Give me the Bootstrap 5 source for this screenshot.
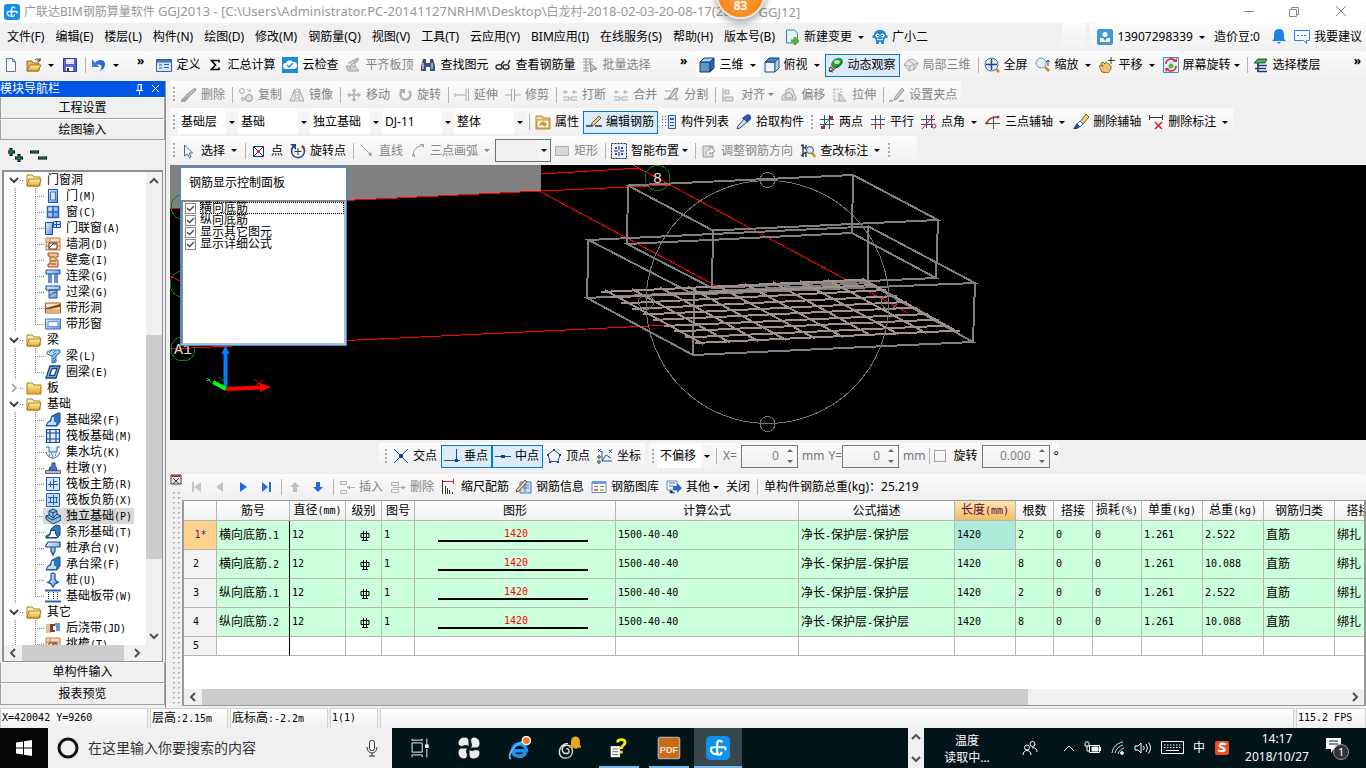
<!DOCTYPE html>
<html lang="zh-CN">
<head>
<meta charset="utf-8">
<meta name="viewport" content="width=device-width, initial-scale=1">
<title>广联达BIM钢筋算量软件 GGJ2013</title>
<link href="https://cdn.jsdelivr.net/npm/bootstrap@5.3.0/dist/css/bootstrap.min.css" rel="stylesheet">
<style>
:root{--face:#f0f0f0;--edge:#a0a0a0;--hot:#0078d7;--hotbg:#dcebf7;--sel:#0055e5}
body{font:12px/16px "Noto Sans","Noto Sans CJK SC",sans-serif;color:#000;background:var(--face)}
button,input,select{font:inherit;color:inherit}
a{color:inherit;text-decoration:none}
.song{font-family:"DejaVu Sans Mono","Noto Sans CJK SC",monospace}
.hw{font-size:10px;font-family:"DejaVu Sans Mono",monospace}
.min0{min-width:0;min-height:0}
.ic{width:16px;height:16px;flex:none}
.titlebar{height:23px;color:#999;background:#fff}
.lat{font-size:13px}
.behind{margin-left:28px}
.menurow{height:28px;padding-left:2px}
.menurow .mi{padding:0 6px 0 5px;border:0;background:none;white-space:nowrap}
.toprow{height:28px}
.strip{background:linear-gradient(#fcfcfc,#efefef);white-space:nowrap;border-radius:2px}
.tb{display:inline-flex;align-items:center;gap:4px;height:23px;padding:0 3px 0 2px;border:1px solid transparent;background:none;white-space:nowrap}
.tb:disabled{color:#848484}
.tb.on{border-color:var(--hot);background:var(--hotbg)}
.dd::after{content:"";border:3px solid transparent;border-top:3px solid currentColor;border-bottom:0;margin:0 1px 0 2px}
.tight::after{margin:0 0 0 -1px}
.vsep{width:1px;height:16px;margin:0 2px 0 3px;background:#b4b4b4;flex:none}
.grip{width:8px;height:17px;flex:none;background:radial-gradient(circle,#aaa 1px,transparent 1px) 2px 0/4px 4px repeat-y}
.more{font-weight:bold;height:28px;line-height:12px;border:0;background:none;padding:0 5px 8px}
.sel-box{appearance:none;border:0;border-radius:0;height:23px;width:72px;padding:0 16px 0 3px;background:#fff url("data:image/svg+xml,%3Csvg xmlns='http://www.w3.org/2000/svg' width='12' height='23'%3E%3Crect width='12' height='23' fill='%23f4f4f4'/%3E%3Cpath d='M3 10h6l-3 3z'/%3E%3C/svg%3E") right 0 center no-repeat}
.sel-box.s60{width:60px}
.sel-box.s56{width:56px}
.sel-box.boxed{width:56px;border:1px solid #707070;background-color:#f0f0f0}
.r26{height:26px}.r27{height:27px}.r28{height:28px}.r29{height:29px}
.work{padding-top:2px}
.side{width:166px;flex:none;border-right:1px solid #8f8f8f;padding-bottom:3px}
.side-h{height:16px;background:var(--sel);color:#fff}
.navbtn{height:22px;border:1px solid var(--edge);border-top-color:#fff;background:#f0f0f0;width:100%}
.pm{height:30px;padding:8px}
.treebox{border:1px solid #8a9099;border-width:2px 1px 1px 2px;background:#fff;margin:0 2px 0 2px}
.tree li{height:16px;white-space:nowrap}
.tree .branch{display:flex;align-items:center;padding-left:4px}
.tree .branch .arr{width:12px;height:12px}
.tree .branch .stub{width:3px;margin-right:3px;border-top:1px dotted #808080}
.tree .branch .ic{margin-right:5px}
.leaf{--v:repeating-linear-gradient(#808080 0 1px,transparent 1px 2px);padding-left:39px;
 background:var(--v) 11px 0/1px 16px no-repeat,var(--v) 31px 0/1px 16px no-repeat,repeating-linear-gradient(90deg,#808080 0 1px,transparent 1px 2px) 31px 8px/10px 1px no-repeat}
.leaf.end{background-size:1px 16px,1px 9px,10px 1px}
.leaf a{display:inline-flex;align-items:center;gap:5px;padding:0 2px;height:16px;vertical-align:top}
.leaf a.cur{background:#d9d9d9}
.vs{width:16px;background:#f0f0f0;flex:none}
.hs{height:16px;background:#f0f0f0;flex:none}
.thumb{background:#cdcdcd}
.view{background:#000;min-height:120px;overflow:hidden}
.view svg.scene{display:block}
.panel{left:10px;top:2px;width:167px;height:179px;background:#fff;border:1px solid #2f8ae8}
.phead{height:32px;padding:7px 8px}
.plist{border:2px solid #838990;border-right-color:#b8bcc0;border-bottom-color:#b8bcc0}
.plist label{display:flex;align-items:center;height:12px;line-height:12px;gap:4px;padding-left:2px}
.plist input{appearance:none;width:11px;height:11px;flex:none;margin:0;border:1px solid #888;background:#fff url("data:image/svg+xml,%3Csvg xmlns='http://www.w3.org/2000/svg' width='9' height='9'%3E%3Cpath d='M1 4l2.5 2.5L8 2' fill='none' stroke='%23444' stroke-width='1.3'/%3E%3C/svg%3E")}
.plist .foc{outline:1px dotted #000;outline-offset:-1px;flex:1}
.snap{height:32px;padding-left:208px}
.num{display:flex;width:57px;height:23px;border:1px solid #7a7a7a;align-items:center;color:#808080}
.num.wide{width:68px}
.num input{width:0;flex:1;border:0;background:none;text-align:right;padding:0 4px 0 0}
.cbx{appearance:none;width:12px;height:12px;border:1px solid #a0a0a0;margin:0 8px 0 2px}
.lower{padding:2px 0 2px}
.dots{width:12px;flex:none;background:radial-gradient(circle,#b0b0b0 1px,transparent 1px) 1px 0/5px 5px}
.gridwrap{background:#fff;border:1px solid #999;border-width:1px 2px 1px 2px}
.gt{table-layout:fixed;width:1222px;border-collapse:separate;border-spacing:0}
.gt th,.gt td{border-right:1px solid #b4b8b4;border-bottom:1px solid #b4b8b4;padding:0 0 0 2px;overflow:hidden;white-space:nowrap;font-weight:normal;vertical-align:middle}
.gt thead th{height:20px;text-align:center;background:linear-gradient(#fff,#f0f0f0);padding:0}
.gt tbody th{text-align:center;background:#f2f2f2;padding:0 8px 0 0}
.gt tbody th.hot{padding:0 0 0 1px}
.gt tbody tr{height:29px;background:#ccffdb}
.gt tbody tr.new{height:19px;background:#fff}
.gt tbody td:nth-child(2){border-right:1px solid #000}
.gt thead th.hot{background:linear-gradient(#fde3b4,#f1bd63);color:#5c0a3c}
.gt tbody th.hot{background:#ffd38c;color:#5c0a7c}
.gt td.cell{background:#adebd8}
.gt .bar{width:150px;height:2px;background:#000;margin:0 21px}
.gt .len{line-height:12px;color:#f00;text-align:center}
.blank{height:33px}
.status{height:20px;gap:2px}
.status>div{border:1px solid #d0d0d0;border-bottom:0;background:linear-gradient(#fff,#f0f0f0);padding:1px 0 0 1px;white-space:nowrap}
.w148{width:148px}.w78{width:78px}.w98{width:98px}.w48{width:48px}.w70{width:70px}
.task{height:40px;background:#04151a;color:#fff}
.task button{border:0;background:none;padding:0}
.task .start{width:48px;background:#050708;display:flex;align-items:center;justify-content:center}
.search{width:344px;background:#f0f0f0;color:#333;margin-right:2px}
.search input{font-size:14px;border:0;background:none;padding:0}
.search input::placeholder{color:#333;opacity:1}
.app-i{width:50px;height:40px;display:flex;align-items:center;justify-content:center}
.app-i svg{width:24px;height:24px}
.task .run{background:linear-gradient(#76b9ed,#76b9ed) center bottom/40px 2px no-repeat}
.task .act{width:48px;background:#37474b;box-shadow:inset 0 -2px #76b9ed}
.temp{width:86px;padding:4px 0;line-height:17px}
.tray{width:208px;margin-left:12px}
.clock{width:78px;margin:0 8px;padding:2px 0;line-height:18px}
.ball{left:716px;top:-30px;width:49px;height:49px;border-radius:50%;background:radial-gradient(circle at 50% 60%,#ffa040,#f57400);border:2px solid #e8e4e0;box-shadow:0 3px 8px #0006;color:#fff;font:bold 12px/16px "Open Sans",sans-serif;padding-top:26px}
</style>
</head>
<body>
<svg width="0" height="0" class="position-absolute" aria-hidden="true" fill="none">
<defs>
<linearGradient id="gb" x2="1" y2="1"><stop stop-color="#e8f3ff"/><stop offset="1" stop-color="#5b93d6"/></linearGradient>
<linearGradient id="gy" x2="0" y2="1"><stop stop-color="#fff2b0"/><stop offset="1" stop-color="#e0a42c"/></linearGradient>
</defs>
<symbol id="logo" viewBox="0 0 16 16"><rect width="16" height="16" rx="3" fill="#1190ee"/><path d="M10.500 3.800C8.500 2.300 7.500 3.500 7.500 5v6c0 2 2.500 2 2.800 0M7.500 12C5 12.500 3.300 11 3.300 9c0-1.200.7-1.500 1.700-1.500h7c1 0 1.300.7 1 1.500" stroke="#fff" stroke-width="1.400" fill="none" stroke-linecap="round"/></symbol>
<symbol id="new" viewBox="0 0 16 16"><path d="M3.500 1.500h6l3 3v10h-9z" fill="#fff" stroke="#56749c"/><path d="M9.500 1.500v3h3" fill="none" stroke="#56749c"/></symbol>
<symbol id="open" viewBox="0 0 16 16"><path d="M1 4h5l1 2h6v8H1z" fill="#e8b84a" stroke="#9b7320"/><path d="M1 14l3-6h11l-3 6z" fill="url(#gy)" stroke="#9b7320"/><path d="M9 3c2-2 4-1 5 1m0-3v3h-3" fill="none" stroke="#333"/></symbol>
<symbol id="save" viewBox="0 0 16 16"><path d="M1.500 1.500h13v13h-13z" fill="#5a64d0" stroke="#33378c"/><path d="M4 2h8v5H4z" fill="#dfe8ff"/><path d="M4 10h7v4H4z" fill="#fff"/><path d="M5 11h2v3H5z" fill="#333"/></symbol>
<symbol id="undo" viewBox="0 0 16 16"><path d="M4 6c4-5 10-3 10 1 0 4-3 6-5 7 2-3 3-8-3-6" fill="#2e68c9"/><path d="M1 2v8h7z" fill="#3c7be0"/></symbol>
<symbol id="def" viewBox="0 0 16 16"><path d="M.5 2.500h15v12H.5z" fill="#d5e6fb" stroke="#2f62ae"/><path d="M1 3h14v2H1zM3 8h3M3 11h3" stroke="#2f62ae" fill="#5c8cd0"/><path d="M8 7h5v1H8zM8 10h5v1H8z" fill="#2f62ae"/></symbol>
<symbol id="sum" viewBox="0 0 16 16"><path d="M12 5.500V3.500H4.500l4 4.500-4 4.500H12v-2" fill="none" stroke="#000" stroke-width="1.600"/></symbol>
<symbol id="cloud" viewBox="0 0 16 16"><path d="M0 0h16v16H0z" fill="#178edb"/><path d="M4 12a3 3 0 010-6 4 4 0 017-1 3.500 3.500 0 011 7z" fill="#fff"/><path d="M5 8l2 2 4-4" stroke="#178edb" stroke-width="1.500" fill="none"/></symbol>
<symbol id="slab" viewBox="0 0 16 16"><path d="M1 9h9l4 5H3zM3 6l10-5v3L6 8M5 9v4M10 3v6" fill="#d0d0d0" stroke="#a4a4a4"/></symbol>
<symbol id="bino" viewBox="0 0 16 16"><path d="M3 2h3v4h4V2h3l2 7v5h-5v-4H6v4H1V9z" fill="#3c4f74"/><path d="M3 6v6M12 6v6" stroke="#b8c8e8" stroke-width="1.500"/></symbol>
<symbol id="glass" viewBox="0 0 16 16"><path d="M6 8l3-4M13 7l2-4" stroke="#333" stroke-width="1.500"/><ellipse cx="4" cy="10" rx="3" ry="2.200" fill="none" stroke="#333" stroke-width="1.500"/><ellipse cx="11" cy="10" rx="3" ry="2.200" fill="none" stroke="#333" stroke-width="1.500"/></symbol>
<symbol id="batch" viewBox="0 0 16 16"><path d="M1 2h10M1 5h10M1 8h6M1 11h6M1 14h6M4 2v12M8 2v5" stroke="#999" fill="none"/><path d="M8 6l7 6-4 .5L9 15z" fill="#ccc" stroke="#888"/></symbol>
<symbol id="cube" viewBox="0 0 16 16"><path d="M1 5h10v10H1z" fill="#5d97cf" stroke="#163a66"/><path d="M1 5l4-4h10l-4 4z" fill="#a9d0f2" stroke="#163a66"/><path d="M11 5l4-4v10l-4 4z" fill="#2e6aa8" stroke="#163a66"/></symbol>
<symbol id="cubet" viewBox="0 0 16 16"><path d="M1 5h10v10H1z" fill="#eaf3fc" stroke="#285284"/><path d="M1 5l4-4h10l-4 4z" fill="#3e86cc" stroke="#163a66"/><path d="M11 5l4-4v10l-4 4z" fill="#b5d2ee" stroke="#285284"/></symbol>
<symbol id="orbit" viewBox="0 0 16 16"><ellipse cx="9" cy="6" rx="6.500" ry="4.500" transform="rotate(-35 9 6)" fill="#2a9848"/><ellipse cx="9" cy="5" rx="3" ry="2" fill="#aee8a4"/><path d="M1 14c4 0 9-4 13-9M2 10l-1 4 4 1" stroke="#194a28" fill="none"/><path d="M2 10l4 3" stroke="#d22" stroke-width="1.500"/></symbol>
<symbol id="part3" viewBox="0 0 16 16"><path d="M1 8l4-5 5-1 5 4-3 6-6 2zM1 8l6 1 8-3M7 9l-1 5M5 3l6 4v6" fill="#e6e6e6" stroke="#aaa"/></symbol>
<symbol id="full" viewBox="0 0 16 16"><circle cx="7.500" cy="7.500" r="6.500" fill="#e6f0fc" stroke="#4767a0"/><path d="M7.500 2v11M2 7.500h11" stroke="#1b3f8c" stroke-width="1.500"/><path d="M12 12l3 3" stroke="#c08a30" stroke-width="2.500"/></symbol>
<symbol id="zoomi" viewBox="0 0 16 16"><circle cx="6" cy="6" r="5" fill="#e6f0fc" stroke="#8095b8"/><path d="M13 3v6m-2-4l2-2 2 2" stroke="#1b3f8c" fill="none"/><path d="M10 10l4 4" stroke="#c08a30" stroke-width="2.500"/></symbol>
<symbol id="hand" viewBox="0 0 16 16"><path d="M3 15L0 9l2-1 2 2-2-4 2-1 2 2 1-2 3 2 2 2v3l-3 4z" fill="#eec36c" stroke="#93692a"/><path d="M12 0v7M9 3.500h7" stroke="#333"/></symbol>
<symbol id="rots" viewBox="0 0 16 16"><path d="M.5.500h15v15H.5z" fill="#dceffc" stroke="#3f8bc5"/><path d="M3 7a5 5 0 019-3M13 9a5 5 0 01-9 3" stroke="#e12c2c" stroke-width="1.600" fill="none"/><path d="M10 5h4V1zM2 11l4 0-3 4z" fill="#e12c2c"/><circle cx="8" cy="9" r="2.500" fill="#62b347"/></symbol>
<symbol id="floors" viewBox="0 0 16 16"><path d="M1 6l4-4h9l-2 4z" fill="#4fae5a" stroke="#1b5c34"/><path d="M4 8.500h10M2 11.500h11M4 14.500h10M5 6v9" stroke="#1f3d74" stroke-width="1.600"/></symbol>
<symbol id="brush" viewBox="0 0 16 16"><path d="M14 1l1 2-7 7-3-2z" fill="#bbb" stroke="#999"/><path d="M5 8l3 3-4 4H0v-2z" fill="#a4a4a4"/></symbol>
<symbol id="brushc" viewBox="0 0 16 16"><path d="M13 0l3 3-6 7-3-2z" fill="#f0d080" stroke="#806020"/><path d="M7 7l3 3-3 3-3-3z" fill="#fff" stroke="#36c"/><path d="M4 9l3 4-3 2H0z" fill="#234a86"/></symbol>
<symbol id="copy" viewBox="0 0 16 16"><circle cx="4" cy="4" r="2.500" fill="none" stroke="#aaa"/><circle cx="11" cy="11" r="3.500" fill="#ddd" stroke="#999"/><circle cx="5" cy="12" r="1.500" stroke="#aaa" fill="none"/><path d="M9 2l3 3V2" stroke="#aaa" fill="none"/></symbol>
<symbol id="mirror" viewBox="0 0 16 16"><path d="M6 2v12H1zM10 2v12h5z" fill="#e8e8e8" stroke="#a4a4a4"/><path d="M8 1v14" stroke="#aaa" stroke-dasharray="2 1"/></symbol>
<symbol id="move" viewBox="0 0 16 16"><path d="M8 2v12M2 8h12" stroke="#bcbcbc" stroke-width="2"/><path d="M8 1L5.500 4h5zM8 15l-2.500-3h5zM1 8l3-2.500v5zM15 8l-3-2.500v5z" fill="#b4b4b4"/></symbol>
<symbol id="rot" viewBox="0 0 16 16"><path d="M5 4a5 5 0 107 0" fill="none" stroke="#b4b4b4" stroke-width="2.500"/><path d="M2 2h6v5z" fill="#b0b0b0"/></symbol>
<symbol id="extend" viewBox="0 0 16 16"><path d="M1 8h10M1 6v4M12 2v12M14.500 2v12" stroke="#aaa" fill="none"/></symbol>
<symbol id="trim" viewBox="0 0 16 16"><path d="M0 8h6M10 8h6M6.500 2v12M9.500 2v12" stroke="#aaa" fill="none"/></symbol>
<symbol id="brk" viewBox="0 0 16 16"><path d="M1 5h5M10 5h5M3 3v4M12 3v4M1 10h6v3H1M15 10H9v3h6" stroke="#aaa" fill="none"/></symbol>
<symbol id="split" viewBox="0 0 16 16"><path d="M0 12h15M1 4h6M12 2v12M3 12L12 3" stroke="#999" fill="none"/><path d="M10 2l4-1-1 4-6 6-2 1 1-3z" fill="#ccc" stroke="#999"/></symbol>
<symbol id="align" viewBox="0 0 16 16"><path d="M2 1v14" stroke="#999"/><path d="M4 3h4v4H4zM4 10h8v4H4z" fill="#ddd" stroke="#aaa"/></symbol>
<symbol id="offs" viewBox="0 0 16 16"><path d="M1 13V9l3-2 1-4 3-2 4 2 1 4 2 3v3z" fill="#e2e2e2" stroke="#aaa"/><path d="M4 11l1-4 3-2 3 3 1 3z" fill="none" stroke="#999"/></symbol>
<symbol id="stretch" viewBox="0 0 16 16"><path d="M2 2h7v12H2z" fill="#eee" stroke="#aaa" stroke-dasharray="2 1"/><path d="M7 6l7 8H7z" fill="#ddd" stroke="#aaa"/></symbol>
<symbol id="gripset" viewBox="0 0 16 16"><path d="M0 14h4M10 14h5" stroke="#999" stroke-width="1.500"/><path d="M13 1l2 2-7 9-3 1 1-3z" fill="#ccc" stroke="#999"/></symbol>
<symbol id="prop" viewBox="0 0 16 16"><path d="M1 2h6l1 2h7v11H1z" fill="#f8d98d" stroke="#b58a30"/><path d="M2 6h12v8H2z" fill="#fff" stroke="#b58a30"/><path d="M3 12c4-6 6-6 9-2l-2 3-3-2z" fill="#d99838"/></symbol>
<symbol id="edit" viewBox="0 0 16 16"><path d="M0 12h6l2-3M9 12h7" stroke="#333" stroke-width="1.500" fill="none"/><path d="M13 2l2 2-7 7-3 1 1-3z" fill="#f6d47c" stroke="#555"/></symbol>
<symbol id="list" viewBox="0 0 16 16"><path d="M1.500 2v12M4.500 2v12" stroke="#557" stroke-dasharray="1 2"/><path d="M7.500 1.500h7v13h-7z" fill="#d9e8fb" stroke="#2d5faf"/><path d="M9 4h4v2H9zM9 8h4v1H9zM9 11h4v1H9z" fill="#2d5faf"/></symbol>
<symbol id="pick" viewBox="0 0 16 16"><path d="M10 1c3-2 6 1 5 4l-4 4-5-5z" fill="#2759a8"/><path d="M8 5l3 3-7 6-3 1 1-3z" fill="#c8ddf6" stroke="#456"/></symbol>
<symbol id="two" viewBox="0 0 16 16"><path d="M5.500 1v14M10.500 1v14M1 5.500h14M1 10.500h14" stroke="#405078"/><path d="M2 14L13 3" stroke="#22a03a"/><path d="M11 2h3v3h-3zM2 12h3v3H2z" fill="#c22"/></symbol>
<symbol id="para" viewBox="0 0 16 16"><path d="M5.500 1v14M10.500 1v14M1 5.500h14" stroke="#405080"/><path d="M1 10.500h14" stroke="#c22"/></symbol>
<symbol id="ang" viewBox="0 0 16 16"><path d="M5.500 1v13M10.500 1v13M0 5.500h14M0 10.500h12" stroke="#405080"/><path d="M1 15L13 1" stroke="#c22"/><circle cx="13" cy="12" r="2" fill="none" stroke="#c22"/></symbol>
<symbol id="arcx" viewBox="0 0 16 16"><path d="M2 9c1-4 5-6 11-6" stroke="#c22" fill="none" stroke-width="1.300"/><circle cx="2" cy="9" r="1.500" fill="#c22"/><circle cx="13" cy="3" r="1.500" fill="#c22"/><path d="M0 9.500h15M8.500 2v13" stroke="#555"/></symbol>
<symbol id="deldim" viewBox="0 0 16 16"><path d="M1.500 1v5M14.500 1v5M1 3.500h13" stroke="#333"/><path d="M7 8l7 7M14 8l-7 7" stroke="#d22" stroke-width="1.600"/></symbol>
<symbol id="cursor" viewBox="0 0 16 16"><path d="M3.500 2v11l3-2 2 4 1.500-1-2-4h3.500z" fill="#fff" stroke="#48608c"/></symbol>
<symbol id="pt" viewBox="0 0 16 16"><path d="M2.500 3.500h10v10h-10z" fill="#fff" stroke="#1c2c80"/><path d="M3 4l9 9M12 4l-9 9" stroke="#1c2c80"/><path d="M6 7h3v3H6z" fill="#d22"/></symbol>
<symbol id="rotpt" viewBox="0 0 16 16"><path d="M4 3a6.500 6.500 0 108 0" fill="none" stroke="#2b4886" stroke-width="1.600"/><path d="M0 1h6v6z" fill="#2b4886"/><path d="M8 5v7M4.500 8.500h7" stroke="#333"/><circle cx="13" cy="4" r="1.500" fill="#c22"/></symbol>
<symbol id="line" viewBox="0 0 16 16"><path d="M2 2l10 10" stroke="#999"/><path d="M13 13l-4-1 3-3z" fill="#999"/></symbol>
<symbol id="arc" viewBox="0 0 16 16"><path d="M3 14C3 8 5 4 11 3" stroke="#999" fill="none"/><path d="M9 1h5v4zM2 11h3v4z" fill="#aaa"/></symbol>
<symbol id="rect" viewBox="0 0 16 16"><path d="M1.500 3.500h13v9h-13z" fill="#d8d8d8" stroke="#b0b0b0"/></symbol>
<symbol id="smart" viewBox="0 0 16 16"><path d="M.5.500h15v15H.5z" fill="#e4eefc" stroke="#223" stroke-dasharray="2 1"/><path d="M3 8h10M8 3v10" stroke="#223" stroke-dasharray="4 2"/><path d="M4 4h2v2H4zM10 4h2v2h-2zM4 10h2v2H4zM10 10h2v2h-2z" fill="#1c4f9e"/></symbol>
<symbol id="dir" viewBox="0 0 16 16"><path d="M2 3h10v11H2z" fill="#ddd" stroke="#999"/><path d="M5 12c0-4 1-5 4-5V3l5 5-5 3v-2" fill="#f4f4f4" stroke="#999"/></symbol>
<symbol id="chk" viewBox="0 0 16 16"><path d="M1 2l5 4M1 13l5-4M3 1v13M6 2v3M6 9v5" stroke="#234" stroke-width="1.300"/><circle cx="10" cy="7" r="3.500" fill="#d9e9fc" stroke="#456"/><path d="M12 10l3 4" stroke="#d29030" stroke-width="2.500"/></symbol>
<symbol id="x1" viewBox="0 0 16 16"><path d="M1 1l14 14M15 1L1 15" stroke="#1d4f9e"/><path d="M6 6h4v4H6z" fill="#16408c"/></symbol>
<symbol id="x2" viewBox="0 0 16 16"><path d="M0 12.500h16M12.500 1v12" stroke="#1d4f9e"/><path d="M11 11h3v3h-3z" fill="#16408c"/></symbol>
<symbol id="x3" viewBox="0 0 16 16"><path d="M0 8.500h16" stroke="#1d4f9e"/><path d="M6 7h4v3H6z" fill="#16408c"/></symbol>
<symbol id="x4" viewBox="0 0 16 16"><path d="M8 2l6 4.500-2 7H4l-2-7z" fill="none" stroke="#1d4f9e"/><path d="M7 1h2v2H7zM13 6h2v2h-2zM11 13h2v2h-2zM3 13h2v2H3zM1 6h2v2H1z" fill="#16408c"/></symbol>
<symbol id="x5" viewBox="0 0 16 16"><path d="M5 3v10h10M5 13l4-6 5 3M1 1l3 3M4 1L1 4M12 2l3 3M15 1l-3 4" stroke="#1d4f9e" fill="none"/><circle cx="2" cy="9" r="1.300" stroke="#333" fill="none"/><circle cx="2" cy="14" r="1.300" stroke="#333" fill="none"/></symbol>
<symbol id="ins" viewBox="0 0 16 16"><path d="M1.500 2.500h6v3h-6zM1.500 11.500h6v3h-6zM8 8.500h8" fill="#f0f0f0" stroke="#b4b4b4"/><path d="M8 8.500l3-2v4z" fill="#aaa"/></symbol>
<symbol id="del" viewBox="0 0 16 16"><path d="M1.500 3.500h7v3h-7zM1.500 10.500h7v3h-7zM3 8.500h12" fill="#f0f0f0" stroke="#b4b4b4"/><path d="M16 8.500l-4-2v4z" fill="#aaa"/></symbol>
<symbol id="scale" viewBox="0 0 16 16"><path d="M1.500 1v14M4.500 7v8M6.500 9v6M8.500 11v4M11.500 13v2" stroke="#333"/><path d="M2 2.500h10M12.500 0v5" stroke="#c22"/></symbol>
<symbol id="info" viewBox="0 0 16 16"><path d="M4 3h11v11H4z" fill="#c9defa" stroke="#5276b4"/><path d="M7 6h6M7 9h6M9 3v10" stroke="#5276b4"/><path d="M9 1l2 2-8 9-3 1 1-3z" fill="#f5d37a" stroke="#555"/></symbol>
<symbol id="lib" viewBox="0 0 16 16"><path d="M1 2.500h14v11H1z" fill="#fff" stroke="#6488c0"/><path d="M1 2h14v3H1z" fill="#6f9bd8"/><path d="M3 7.500h4M9 7.500h4" stroke="#777"/><path d="M3 11h4" stroke="#d33" stroke-width="1.500"/><path d="M9 11h4" stroke="#d90" stroke-width="1.500"/></symbol>
<symbol id="oth" viewBox="0 0 16 16"><path d="M1 2h10v9H1z" fill="#f3f7fd" stroke="#6c8cc0"/><path d="M3 4h6M3 7h4M4 11v3h5" stroke="#678"/><path d="M7 7h4V4l5 5-5 5v-3H7z" fill="#2b66c8"/></symbol>
<symbol id="fold" viewBox="0 0 16 16"><path d="M1 3h5l2 2h6v9H1z" fill="#fff1b3" stroke="#a97c1c"/><path d="M1 14l2-7h12l-2 7z" fill="url(#gy)" stroke="#a97c1c"/></symbol>
<symbol id="foldc" viewBox="0 0 16 16"><path d="M1 3h5l2 2h7v9H1z" fill="url(#gy)" stroke="#a97c1c"/></symbol>
<symbol id="t1" viewBox="0 0 16 16"><path d="M3.500 1.500h9v13h-9z" fill="url(#gb)" stroke="#1b4ea8"/><path d="M5.500 4h5v8h-5z" fill="#d8e8ff" stroke="#3f70c4"/></symbol>
<symbol id="t2" viewBox="0 0 16 16"><path d="M2.500 2.500h11v11h-11zM8 3v10M3 8h10" fill="url(#gb)" stroke="#2a62c0" stroke-width="1.500"/></symbol>
<symbol id="t3" viewBox="0 0 16 16"><path d="M.5 2.500h7v12h-7z" fill="url(#gb)" stroke="#1b4ea8"/><path d="M8.500 1.500h7v6h-7zM8.500 4.500h7M11.500 1v6" fill="#cfe2ff" stroke="#1b4ea8"/></symbol>
<symbol id="t4" viewBox="0 0 16 16"><path d="M1 2h14v12H1zM1 6h14M1 10h14M5 2v4M10 10v4" fill="#f9dcc0" stroke="#c87a44"/><path d="M4 13V7h8v6z" fill="#fff" stroke="#5a3010"/><path d="M4 12l4-4 3 0" stroke="#5a3010" fill="none"/></symbol>
<symbol id="t5" viewBox="0 0 16 16"><path d="M3 1h10v4h-2v3h2v7H3v-3h2V4H3z" fill="#f3c294" stroke="#9c5220"/><path d="M6 5h4M6 9h5M6 12h5" stroke="#9c5220"/></symbol>
<symbol id="t6" viewBox="0 0 16 16"><path d="M1 2h14v4H1z" fill="url(#gb)" stroke="#1d4f9e"/><path d="M4 6v9M6 6v9M10 6v9M12 6v9" stroke="#2e68c0" stroke-width="1.500"/></symbol>
<symbol id="t7" viewBox="0 0 16 16"><path d="M1 2h14v4H1zM4 6h8v8H4z" fill="url(#gb)" stroke="#1d4f9e"/><path d="M4 12l4-3 4-1" stroke="#1d4f9e" fill="none"/></symbol>
<symbol id="t8" viewBox="0 0 16 16"><path d="M.5 3h15v10H.5z" fill="#fbe6cf" stroke="#a0521c"/><path d="M1 8l14-4v3L5 9H1z" fill="#8a4a20"/><path d="M1 9h14v4H1z" fill="#e8b080"/></symbol>
<symbol id="t9" viewBox="0 0 16 16"><path d="M.5 3h15v10H.5z" fill="url(#gb)" stroke="#3f70c4"/><path d="M3 5.500h10v5H3z" fill="#eaf2ff" stroke="#6b95dc"/></symbol>
<symbol id="t10" viewBox="0 0 16 16"><path d="M2 4l4-2h9v3l-4 3v6l-4 1V8L2 6z" fill="url(#gb)" stroke="#2470b8"/><path d="M7 8l4-3M8 11l3-3M8 14l3-3M4 5l3-3M8 5l3-3" stroke="#2470b8"/></symbol>
<symbol id="t11" viewBox="0 0 16 16"><path d="M5 2h10l-4 12H1zM7 4.500h5l-2.500 7h-5z" fill="#8db7ea" fill-rule="evenodd" stroke="#123f88" stroke-width="1.300"/></symbol>
<symbol id="t12" viewBox="0 0 16 16"><path d="M1 14l2-4 2-1 2-5 6-3h2v9l-3 4z" fill="#2d74ba" stroke="#154a84"/><path d="M2 13l2-3h2l1-5h2v5h2v3z" fill="#bfe0f8"/></symbol>
<symbol id="t13" viewBox="0 0 16 16"><path d="M1.500 1.500h13v13h-13zM5 5h6v6H5zM2 5h12M2 11h12M5 2v12M11 2v12" fill="#dceaff" stroke="#154a94" stroke-width="1.200"/></symbol>
<symbol id="t14" viewBox="0 0 16 16"><path d="M1 3h3v5h8V3h3M1 8c2 8 12 8 14 0" fill="#dceaff" stroke="#2b65b0"/><path d="M4 11h1M7 12h1M10 11h1M6 10h1" stroke="#124"/></symbol>
<symbol id="t15" viewBox="0 0 16 16"><path d="M.5 10.500h15v3H.5z" fill="#b8b8b8" stroke="#666"/><path d="M4 10l1-3h2V3h3v4h1l1 3z" fill="#4c7fd6" stroke="#1c439a"/></symbol>
<symbol id="t16" viewBox="0 0 16 16"><path d="M1.500 1.500h13v13h-13z" fill="#d8e8ff" stroke="#1d5bb4"/><path d="M3 8.500h10M8.500 3v10M5.500 5v6M8 5.500h4" stroke="#1d5bb4"/></symbol>
<symbol id="t17" viewBox="0 0 16 16"><path d="M1.500 1.500h13v13h-13z" fill="#c4dafa" stroke="#1d5bb4"/><path d="M3 5.500h10M3 10.500h10M8.500 3v10M5.500 5v6M11.500 5v6" stroke="#1d5bb4"/></symbol>
<symbol id="t18" viewBox="0 0 16 16"><path d="M1 8l3-1V3l4-2 4 2v3l4 2v4l-8 4-7-5z" fill="#8fbde4" stroke="#123f74"/><path d="M1 8l6 4 9-4M4 3l4 2 4-2M8 5v5M4 7l4 3 4-4" stroke="#123f74" fill="none"/></symbol>
<symbol id="t19" viewBox="0 0 16 16"><path d="M1 14h11l3-3V2l-4-1-5 4-1 5-4 2z" fill="#3778c2" stroke="#123f84"/><path d="M2 13.500l3-3 1-4h4l1 4 2 3z" fill="#fff" stroke="#123f84"/></symbol>
<symbol id="t20" viewBox="0 0 16 16"><path d="M1 5l2-3h12v5H1zM6 7h4v4l-2 4-2-4z" fill="url(#gb)" stroke="#154a94" stroke-width="1.200"/></symbol>
<symbol id="t21" viewBox="0 0 16 16"><path d="M6 2l2-1 2 1v5l2 3h2l-4 2-2 3-2-3-4-2h2l2-3z" fill="url(#gb)" stroke="#154a94" stroke-width="1.200"/></symbol>
<symbol id="t22" viewBox="0 0 16 16"><path d="M0 2.500h16M0 13.500h16" stroke="#2b65b0" stroke-width="2"/><path d="M3.500 4v8M8.500 4v8M12.500 4v8" stroke="#123" stroke-dasharray="1 1"/></symbol>
<symbol id="t23" viewBox="0 0 16 16"><path d="M1 4h5v9H1z" fill="#d9c0b0"/><path d="M5 4h5v8H5z" fill="#80401c"/><path d="M10 3h5v8h-4z" fill="#5f96dc"/><path d="M8 6h3v4H8z" fill="#fff"/></symbol>
<symbol id="steel" viewBox="0 0 12 12"><path d="M2 3.500h8v4H2zM4.500 1v9M7.500 1v9M3 10.500h6" fill="none" stroke="#000"/></symbol>
<symbol id="up" viewBox="0 0 10 10"><path d="M1 7l4-4 4 4" fill="none" stroke="#505050" stroke-width="2"/></symbol>
</svg>

<div class="vh-100 d-flex flex-column overflow-hidden position-relative">
<header class="titlebar d-flex align-items-center flex-shrink-0">
 <svg class="ic mx-1"><use href="#logo"/></svg>
 <span class="text-nowrap">广联达BIM钢筋算量软件 <span class="lat">GGJ2013 - [C:\Users\Administrator.PC-20141127NRHM\Desktop\</span>白龙村<span class="lat">-2018-02-03-20-08-17(26</span></span><span class="lat behind">GGJ12]</span>
 <svg class="ms-auto me-3" width="110" height="14" fill="none" stroke="#888" role="img" aria-label="窗口按钮"><path d="M4 6.500h10M49.500 4.500h7v7h-7zM51.500 4V2.500h7v7H57M96 1l10 10M106 1L96 11"/></svg>
</header>
<div class="ball position-absolute text-center z-3">83</div>

<nav class="menurow d-flex align-items-center flex-shrink-0" aria-label="主菜单">
 <div class="d-flex">
 <button class="mi">文件(F)</button><button class="mi">编辑(E)</button><button class="mi">楼层(L)</button><button class="mi">构件(N)</button><button class="mi">绘图(D)</button><button class="mi">修改(M)</button><button class="mi">钢筋量(Q)</button><button class="mi">视图(V)</button><button class="mi">工具(T)</button><button class="mi">云应用(Y)</button><button class="mi">BIM应用(I)</button><button class="mi">在线服务(S)</button><button class="mi">帮助(H)</button><button class="mi">版本号(B)</button>
 </div>
 <button class="tb dd"><svg class="ic" viewBox="0 0 16 16"><path d="M2.500 1h8l3 3v10h-11z" fill="#e4f1fc" stroke="#3c7fc0"/><path d="M11 8v8M7 12h8" stroke="#4eb31c" stroke-width="3"/></svg>新建变更</button>
 <button class="tb"><svg class="ic" viewBox="0 0 16 16"><path d="M8 1c4 0 6 2 6 5l2 1-1 2-2 0-1 3v3H9v-2H7v2H4v-3L3 9H1L0 7l2-1c0-3 2-5 6-5z" fill="#1a8ade"/><circle cx="5.500" cy="6.500" r="2" fill="#fff"/><circle cx="10.500" cy="6.500" r="2" fill="#fff"/><circle cx="6" cy="6.500" r=".8" fill="#124"/><circle cx="10" cy="6.500" r=".8" fill="#124"/><path d="M5 10q3 2 6 0" stroke="#fff" fill="none"/></svg>广小二</button>
 <div class="strip r28 ms-auto px-2 me-1"><span class="px-1"></span></div>
 <div class="strip r28 d-flex align-items-center ps-1">
  <button class="tb dd"><svg class="ic" viewBox="0 0 16 16"><rect width="16" height="16" rx="2" fill="#3e98d2"/><circle cx="8" cy="5.500" r="2.500" fill="#fff"/><path d="M3 13V9h10v4z" fill="#fff"/><path d="M6 9h4l-2 3z" fill="#3e98d2"/></svg>13907298339</button>
  <span class="ms-1">造价豆:0</span>
  <button class="tb ms-2" aria-label="通知"><svg class="ic" viewBox="0 0 16 16"><path d="M8 0c4 0 5 3 5 6v4l2 2H1l2-2V6c0-3 1-6 5-6zM6 13h4l-2 2z" fill="#1b80ea"/></svg></button>
  <button class="tb"><svg class="ic" viewBox="0 0 16 16"><path d="M.500 1.500h15v10h-3v3l-3-3h-9z" fill="#f4f9ff" stroke="#2a80e0"/><path d="M3 6.500h10" stroke="#2a80e0" stroke-dasharray="2 1.500"/></svg>我要建议</button>
 </div>
</nav>

<div class="toprow d-flex flex-shrink-0">
 <div class="strip d-flex align-items-center">
  <button class="tb" aria-label="新建"><svg class="ic"><use href="#new"/></svg></button>
  <button class="tb dd" aria-label="打开"><svg class="ic"><use href="#open"/></svg></button>
  <button class="tb" aria-label="保存"><svg class="ic"><use href="#save"/></svg></button>
  <span class="vsep"></span>
  <button class="tb dd" aria-label="撤销"><svg class="ic"><use href="#undo"/></svg></button>
  <button class="more ms-2" aria-label="更多">»</button>
 </div>
 <div class="strip d-flex align-items-center flex-grow-1 ps-1">
  <button class="tb"><svg class="ic"><use href="#def"/></svg>定义</button><button class="tb"><svg class="ic"><use href="#sum"/></svg>汇总计算</button><button class="tb"><svg class="ic"><use href="#cloud"/></svg>云检查</button><button class="tb" disabled><svg class="ic"><use href="#slab"/></svg>平齐板顶</button><button class="tb"><svg class="ic"><use href="#bino"/></svg>查找图元</button><button class="tb"><svg class="ic"><use href="#glass"/></svg>查看钢筋量</button><button class="tb" disabled><svg class="ic"><use href="#batch"/></svg>批量选择</button>
  <button class="more ms-auto" aria-label="更多">»</button>
 </div>
 <div class="strip d-flex align-items-center ps-1">
  <button class="tb dd bg-white"><svg class="ic"><use href="#cube"/></svg>三维</button><button class="tb dd"><svg class="ic"><use href="#cubet"/></svg>俯视</button><button class="tb on"><svg class="ic"><use href="#orbit"/></svg>动态观察</button><button class="tb" disabled><svg class="ic"><use href="#part3"/></svg>局部三维</button><span class="vsep"></span><button class="tb"><svg class="ic"><use href="#full"/></svg>全屏</button><button class="tb dd"><svg class="ic"><use href="#zoomi"/></svg>缩放</button><button class="tb dd"><svg class="ic"><use href="#hand"/></svg>平移</button><button class="tb dd tight"><svg class="ic"><use href="#rots"/></svg>屏幕旋转</button><span class="vsep"></span><button class="tb"><svg class="ic"><use href="#floors"/></svg>选择楼层</button>
  <button class="more ms-4" aria-label="更多">»</button>
 </div>
</div>

<div class="work d-flex flex-grow-1 overflow-hidden min0">
 <aside class="side d-flex flex-column song">
  <div class="side-h d-flex align-items-center">模块导航栏<svg class="ms-auto me-1" width="28" height="12" fill="none" stroke="#fff"><path d="M3 7.500h7M5 7V1.500h3V7M8.500 1v6M6.500 8v4M19 2l7 7M26 2l-7 7"/></svg></div>
  <button class="navbtn">工程设置</button>
  <button class="navbtn">绘图输入</button>
  <div class="pm flex-shrink-0"><svg class="d-block" width="42" height="14" fill="none" stroke="#000"><path d="M3 0v8M-1 4h8M11 6v8M7 10h8M22 4h9M30 10h9" stroke-width="3"/><path d="M3 1v6M0 4h6M11 7v6M8 10h6M23 4h7M31 10h7" stroke="#1fb28c"/></svg></div>
  <div class="treebox d-flex flex-column flex-grow-1 overflow-hidden">
   <div class="d-flex flex-grow-1 overflow-hidden">
    <ul class="tree list-unstyled mb-0 flex-grow-1 overflow-hidden">
     <li class="branch"><svg class="arr" viewBox="0 0 12 12"><path d="M2 4l4 4 4-4" fill="none" stroke="#444" stroke-width="2"/></svg><span class="stub"></span><svg class="ic"><use href="#fold"/></svg>门窗洞</li>
     <li class="leaf"><a href="#"><svg class="ic"><use href="#t1"/></svg><span>门<span class="hw">(M)</span></span></a></li>
     <li class="leaf"><a href="#"><svg class="ic"><use href="#t2"/></svg><span>窗<span class="hw">(C)</span></span></a></li>
     <li class="leaf"><a href="#"><svg class="ic"><use href="#t3"/></svg><span>门联窗<span class="hw">(A)</span></span></a></li>
     <li class="leaf"><a href="#"><svg class="ic"><use href="#t4"/></svg><span>墙洞<span class="hw">(D)</span></span></a></li>
     <li class="leaf"><a href="#"><svg class="ic"><use href="#t5"/></svg><span>壁龛<span class="hw">(I)</span></span></a></li>
     <li class="leaf"><a href="#"><svg class="ic"><use href="#t6"/></svg><span>连梁<span class="hw">(G)</span></span></a></li>
     <li class="leaf"><a href="#"><svg class="ic"><use href="#t7"/></svg><span>过梁<span class="hw">(G)</span></span></a></li>
     <li class="leaf"><a href="#"><svg class="ic"><use href="#t8"/></svg><span>带形洞</span></a></li>
     <li class="leaf end"><a href="#"><svg class="ic"><use href="#t9"/></svg><span>带形窗</span></a></li>
     <li class="branch"><svg class="arr" viewBox="0 0 12 12"><path d="M2 4l4 4 4-4" fill="none" stroke="#444" stroke-width="2"/></svg><span class="stub"></span><svg class="ic"><use href="#fold"/></svg>梁</li>
     <li class="leaf"><a href="#"><svg class="ic"><use href="#t10"/></svg><span>梁<span class="hw">(L)</span></span></a></li>
     <li class="leaf end"><a href="#"><svg class="ic"><use href="#t11"/></svg><span>圈梁<span class="hw">(E)</span></span></a></li>
     <li class="branch"><svg class="arr" viewBox="0 0 12 12"><path d="M4 2l4 4-4 4" fill="none" stroke="#999" stroke-width="1.500"/></svg><span class="stub"></span><svg class="ic"><use href="#foldc"/></svg>板</li>
     <li class="branch"><svg class="arr" viewBox="0 0 12 12"><path d="M2 4l4 4 4-4" fill="none" stroke="#444" stroke-width="2"/></svg><span class="stub"></span><svg class="ic"><use href="#fold"/></svg>基础</li>
     <li class="leaf"><a href="#"><svg class="ic"><use href="#t12"/></svg><span>基础梁<span class="hw">(F)</span></span></a></li>
     <li class="leaf"><a href="#"><svg class="ic"><use href="#t13"/></svg><span>筏板基础<span class="hw">(M)</span></span></a></li>
     <li class="leaf"><a href="#"><svg class="ic"><use href="#t14"/></svg><span>集水坑<span class="hw">(K)</span></span></a></li>
     <li class="leaf"><a href="#"><svg class="ic"><use href="#t15"/></svg><span>柱墩<span class="hw">(Y)</span></span></a></li>
     <li class="leaf"><a href="#"><svg class="ic"><use href="#t16"/></svg><span>筏板主筋<span class="hw">(R)</span></span></a></li>
     <li class="leaf"><a href="#"><svg class="ic"><use href="#t17"/></svg><span>筏板负筋<span class="hw">(X)</span></span></a></li>
     <li class="leaf"><a href="#" class="cur"><svg class="ic"><use href="#t18"/></svg><span>独立基础<span class="hw">(P)</span></span></a></li>
     <li class="leaf"><a href="#"><svg class="ic"><use href="#t19"/></svg><span>条形基础<span class="hw">(T)</span></span></a></li>
     <li class="leaf"><a href="#"><svg class="ic"><use href="#t20"/></svg><span>桩承台<span class="hw">(V)</span></span></a></li>
     <li class="leaf"><a href="#"><svg class="ic"><use href="#t12"/></svg><span>承台梁<span class="hw">(F)</span></span></a></li>
     <li class="leaf"><a href="#"><svg class="ic"><use href="#t21"/></svg><span>桩<span class="hw">(U)</span></span></a></li>
     <li class="leaf end"><a href="#"><svg class="ic"><use href="#t22"/></svg><span>基础板带<span class="hw">(W)</span></span></a></li>
     <li class="branch"><svg class="arr" viewBox="0 0 12 12"><path d="M2 4l4 4 4-4" fill="none" stroke="#444" stroke-width="2"/></svg><span class="stub"></span><svg class="ic"><use href="#fold"/></svg>其它</li>
     <li class="leaf"><a href="#"><svg class="ic"><use href="#t23"/></svg><span>后浇带<span class="hw">(JD)</span></span></a></li>
     <li class="leaf"><a href="#"><svg class="ic"><use href="#t4"/></svg><span>挑檐<span class="hw">(T)</span></span></a></li>
    </ul>
    <div class="vs d-flex flex-column align-items-center py-1">
     <svg width="10" height="10"><use href="#up"/></svg>
     <div style="flex:148"></div><div class="thumb w-100" style="flex:222"></div><div style="flex:71"></div>
     <svg width="10" height="10"><g transform="rotate(180 5 5)"><use href="#up"/></g></svg>
    </div>
   </div>
   <div class="hs d-flex align-items-center ps-1"><svg width="10" height="10"><g transform="rotate(-90 5 5)"><use href="#up"/></g></svg><div class="thumb h-100 ms-1" style="width:102px"></div><svg class="ms-2" width="10" height="10"><g transform="rotate(90 5 5)"><use href="#up"/></g></svg></div>
  </div>
  <button class="navbtn">单构件输入</button>
  <button class="navbtn">报表预览</button>
 </aside>

 <main class="d-flex flex-column flex-grow-1 ms-1 min0">
  <div class="d-flex r27 flex-shrink-0"><div class="strip d-flex align-items-center" role="toolbar">
   <span class="grip"></span><button class="tb" disabled><svg class="ic"><use href="#brush"/></svg>删除</button><span class="vsep"></span><button class="tb" disabled><svg class="ic"><use href="#copy"/></svg>复制</button><button class="tb" disabled><svg class="ic"><use href="#mirror"/></svg>镜像</button><span class="vsep"></span><button class="tb" disabled><svg class="ic"><use href="#move"/></svg>移动</button><button class="tb" disabled><svg class="ic"><use href="#rot"/></svg>旋转</button><span class="vsep"></span><button class="tb" disabled><svg class="ic"><use href="#extend"/></svg>延伸</button><button class="tb" disabled><svg class="ic"><use href="#trim"/></svg>修剪</button><span class="vsep"></span><button class="tb" disabled><svg class="ic"><use href="#brk"/></svg>打断</button><button class="tb" disabled><svg class="ic"><use href="#brk"/></svg>合并</button><button class="tb" disabled><svg class="ic"><use href="#split"/></svg>分割</button><span class="vsep"></span><button class="tb dd tight" disabled><svg class="ic"><use href="#align"/></svg>对齐</button><button class="tb" disabled><svg class="ic"><use href="#offs"/></svg>偏移</button><button class="tb" disabled><svg class="ic"><use href="#stretch"/></svg>拉伸</button><span class="vsep"></span><button class="tb" disabled><svg class="ic"><use href="#gripset"/></svg>设置夹点</button>
  </div></div>
  <div class="d-flex r28 flex-shrink-0"><div class="strip d-flex align-items-center" role="toolbar">
   <span class="grip"></span><select class="sel-box s60" aria-label="楼层"><option>基础层</option></select><select class="sel-box" aria-label="类型"><option>基础</option></select><select class="sel-box" aria-label="构件类型"><option>独立基础</option></select><select class="sel-box" aria-label="构件"><option>DJ-11</option></select><select class="sel-box" aria-label="单元"><option>整体</option></select><span class="vsep"></span>
   <button class="tb"><svg class="ic"><use href="#prop"/></svg>属性</button><button class="tb on"><svg class="ic"><use href="#edit"/></svg>编辑钢筋</button><button class="tb"><svg class="ic"><use href="#list"/></svg>构件列表</button><button class="tb"><svg class="ic"><use href="#pick"/></svg>拾取构件</button></div>
   <div class="strip d-flex align-items-center"><span class="grip"></span><button class="tb"><svg class="ic"><use href="#two"/></svg>两点</button><button class="tb"><svg class="ic"><use href="#para"/></svg>平行</button><button class="tb dd"><svg class="ic"><use href="#ang"/></svg>点角</button><button class="tb dd"><svg class="ic"><use href="#arcx"/></svg>三点辅轴</button><button class="tb"><svg class="ic"><use href="#brushc"/></svg>删除辅轴</button><button class="tb dd"><svg class="ic"><use href="#deldim"/></svg>删除标注</button>
  </div></div>
  <div class="d-flex r29 flex-shrink-0"><div class="strip d-flex align-items-center" role="toolbar">
   <span class="grip"></span><button class="tb dd"><svg class="ic"><use href="#cursor"/></svg>选择</button><span class="vsep"></span><button class="tb"><svg class="ic"><use href="#pt"/></svg>点</button><button class="tb"><svg class="ic"><use href="#rotpt"/></svg>旋转点</button><span class="vsep"></span><button class="tb" disabled><svg class="ic"><use href="#line"/></svg>直线</button><button class="tb dd" disabled><svg class="ic"><use href="#arc"/></svg>三点画弧</button><select class="sel-box boxed" aria-label="半径" disabled><option></option></select><button class="tb" disabled><svg class="ic"><use href="#rect"/></svg>矩形</button><span class="vsep"></span><button class="tb dd tight"><svg class="ic"><use href="#smart"/></svg>智能布置</button><span class="vsep"></span><button class="tb" disabled><svg class="ic"><use href="#dir"/></svg>调整钢筋方向</button><button class="tb dd"><svg class="ic"><use href="#chk"/></svg>查改标注</button></div>
   <div class="strip d-flex align-items-center pe-4"><span class="grip"></span></div></div>

  <div class="view flex-grow-1 position-relative">
   <svg class="scene" width="1196" height="274" viewBox="170 165 1196 274" fill="none">
    <path d="M170 165h371v26l-371 18z" fill="#808080"/>
    <g stroke="#f00" shape-rendering="crispEdges"><path d="M170 209l371-18 131-6M541 174l99-6M541 192l237 127M633 165l275 148M170 349l500-24M170 276l20 10"/></g>
    <g stroke="#088008" shape-rendering="crispEdges"><circle cx="657.500" cy="178" r="12.500"/><circle cx="183" cy="207" r="12"/><circle cx="183" cy="284" r="13"/><circle cx="183" cy="349" r="12"/></g>
    <g font-family="Liberation Mono,monospace" font-size="15" fill="#ddd"><text x="653" y="183">8</text><text x="174" y="354">A1</text></g>
    <g stroke="#808080" stroke-width="2" shape-rendering="crispEdges"><path d="M628 185.500L853 175l85 45-225 10.500zM627 244l225-11 84 45-224 10zM628 185.500l-1 58.500M853 175l-1 58M938 220l-2 58M713 230.500l-1 57.500M588.500 240l280-13.500 106.500 56.500-281 11.500zM587 298l281-15 105 59-280 13zM588.500 240l-1.500 58M868.500 226.500l-.500 57M975 283l-2 59M694 294.500l-1 60.500"/></g>
    <g stroke="#a0918b" stroke-width="2" shape-rendering="crispEdges">
     <path d="M601 292l264-12.500M610 297.500l265-12.500M621 303.500l265-13.500M632 309l265-13M643 314.500l264-12.500M653 320l264-12.500M664 326l264-12M674 331.500l265-12M685 337.500l264-12M695 343l265-12.500"/>
     <path d="M605 290l98 54M632 289l98 53.500M660 287.500l98 53.500M688 286.500l98 53.500M717 285.500l98 53M745 284l98 53M773 282l97 53M800 281l98 53M828 280l98 53M862 278.500l95 53"/></g>
    <g stroke="#757575" shape-rendering="crispEdges"><circle cx="767.500" cy="302" r="121.500"/><circle cx="767.500" cy="180" r="7.500"/><circle cx="767.500" cy="424" r="7.500"/><circle cx="646" cy="302" r="7.500"/><circle cx="889" cy="302" r="7.500"/></g>
    <path d="M225.500 389v-38" stroke="#0080ff" stroke-width="4"/><path d="M225.500 345l4 9h-8z" fill="#0080ff"/>
    <path d="M226 389l-13-7" stroke="#0f0" stroke-width="4"/><path d="M211 382l-4-4M207 381l3-2" stroke="#0f0"/><path d="M219 377l4 4 3-4" stroke="#088008"/>
    <path d="M226 389l36-1.500" stroke="#f00" stroke-width="4"/><path d="M260 383l11 4-11 5z" fill="#f00"/><path d="M254 379l9 8M263 380l-9 7" stroke="#f00"/>
   </svg>
   <section class="panel position-absolute d-flex flex-column" aria-label="钢筋显示控制面板">
    <div class="phead">钢筋显示控制面板</div>
    <div class="plist flex-grow-1 song m-0">
     <label><input type="checkbox" checked><span class="foc">横向底筋</span></label>
     <label><input type="checkbox" checked><span>纵向底筋</span></label>
     <label><input type="checkbox" checked><span>显示其它图元</span></label>
     <label><input type="checkbox" checked><span>显示详细公式</span></label>
    </div>
   </section>
  </div>

  <div class="snap d-flex align-items-center flex-shrink-0"><div class="strip d-flex align-items-center r27 ps-1" role="toolbar">
   <span class="grip"></span><button class="tb"><svg class="ic"><use href="#x1"/></svg>交点</button><button class="tb on"><svg class="ic"><use href="#x2"/></svg>垂点</button><button class="tb on"><svg class="ic"><use href="#x3"/></svg>中点</button><button class="tb"><svg class="ic"><use href="#x4"/></svg>顶点</button><button class="tb"><svg class="ic"><use href="#x5"/></svg>坐标</button></div>
   <div class="strip d-flex align-items-center r27 ms-1"><span class="grip"></span><select class="sel-box s56" aria-label="偏移方式"><option>不偏移</option></select><span class="vsep"></span>
   <label class="text-secondary mx-1" for="ox">X=</label><div class="num"><input id="ox" value="0" disabled><svg width="14" height="20" fill="#666"><path d="M4 6h6L7 3zM4 14h6l-3 3z"/></svg></div><span class="text-secondary ms-1">mm</span>
   <label class="text-secondary ms-1" for="oy">Y=</label><div class="num"><input id="oy" value="0" disabled><svg width="14" height="20" fill="#666"><path d="M4 6h6L7 3zM4 14h6l-3 3z"/></svg></div><span class="text-secondary ms-1">mm</span><span class="vsep"></span>
   <input class="cbx" type="checkbox" id="rt"><label class="me-1" for="rt">旋转</label><div class="num wide"><input value="0.000" aria-label="旋转角度" disabled><svg width="14" height="20" fill="#666"><path d="M4 6h6L7 3zM4 14h6l-3 3z"/></svg></div><span class="ms-1">°</span></div>
  </div>

  <section class="lower d-flex flex-shrink-0">
   <div class="d-flex flex-column"><svg width="12" height="12" viewBox="0 0 12 12"><path d="M1 1h10v9H1z" fill="#e8e8e8" stroke="#444"/><path d="M1 1h10v2H1z" fill="#a33"/><path d="M3 4l6 6M9 4l-6 6" stroke="#333"/></svg><div class="dots flex-grow-1 mt-1"></div></div>
   <div class="flex-grow-1 min0">
    <div class="strip d-flex align-items-center r26 ps-1" role="toolbar">
     <button class="tb" aria-label="首条" disabled><svg class="ic" viewBox="0 0 16 16"><path d="M3 3h2v10H3zM12 3v10L5 8z" fill="#c4c4c4"/></svg></button><button class="tb" aria-label="上一条" disabled><svg class="ic" viewBox="0 0 16 16"><path d="M11 3v10L4 8z" fill="#c4c4c4"/></svg></button><button class="tb" aria-label="下一条"><svg class="ic" viewBox="0 0 16 16"><path d="M5 3v10l7-5z" fill="#2868d8"/></svg></button><button class="tb" aria-label="末条"><svg class="ic" viewBox="0 0 16 16"><path d="M4 3v10l6-5zM11 3h2v10h-2z" fill="#2868d8"/></svg></button><span class="vsep"></span><button class="tb" aria-label="上移" disabled><svg class="ic" viewBox="0 0 16 16"><path d="M6 13V8H3l5-5 5 5h-3v5z" fill="#c0c0c0"/></svg></button><button class="tb" aria-label="下移"><svg class="ic" viewBox="0 0 16 16"><path d="M6 3v5H3l5 5 5-5h-3V3z" fill="#2868d8"/></svg></button><span class="vsep"></span><button class="tb" disabled><svg class="ic"><use href="#ins"/></svg>插入</button><button class="tb" disabled><svg class="ic"><use href="#del"/></svg>删除</button><button class="tb"><svg class="ic"><use href="#scale"/></svg>缩尺配筋</button><button class="tb"><svg class="ic"><use href="#info"/></svg>钢筋信息</button><button class="tb"><svg class="ic"><use href="#lib"/></svg>钢筋图库</button><button class="tb dd tight"><svg class="ic"><use href="#oth"/></svg>其他</button><button class="tb">关闭</button><span class="vsep"></span><span class="ms-1">单构件钢筋总重(kg)：25.219</span>
    </div>
    <div class="gridwrap overflow-hidden song">
     <table class="gt">
      <colgroup><col style="width:33px"><col style="width:73px"><col style="width:56px"><col style="width:36px"><col style="width:33px"><col style="width:201px"><col style="width:183px"><col style="width:156px"><col style="width:61px"><col style="width:38px"><col style="width:39px"><col style="width:49px"><col style="width:61px"><col style="width:61px"><col style="width:71px"><col style="width:72px"></colgroup>
      <thead><tr><th></th><th>筋号</th><th>直径<span class="hw">(mm)</span></th><th>级别</th><th>图号</th><th>图形</th><th>计算公式</th><th>公式描述</th><th class="hot">长度<span class="hw">(mm)</span></th><th>根数</th><th>搭接</th><th>损耗<span class="hw">(%)</span></th><th>单重<span class="hw">(kg)</span></th><th>总重<span class="hw">(kg)</span></th><th>钢筋归类</th><th>搭接形式</th></tr></thead>
      <tbody>
      <tr><th class="hot hw">1*</th><td>横向底筋<span class="hw">.1</span></td><td class="hw">12</td><td class="text-center"><svg width="12" height="12" role="img" aria-label="三级钢"><use href="#steel"/></svg></td><td class="hw">1</td><td><div class="len hw">1420</div><div class="bar"></div></td><td class="hw">1500-40-40</td><td>净长<span class="hw">-</span>保护层<span class="hw">-</span>保护层</td><td class="hw cell">1420</td><td class="hw">2</td><td class="hw">0</td><td class="hw">0</td><td class="hw">1.261</td><td class="hw">2.522</td><td>直筋</td><td>绑扎</td></tr>
      <tr><th class="hw">2</th><td>横向底筋<span class="hw">.2</span></td><td class="hw">12</td><td class="text-center"><svg width="12" height="12" role="img" aria-label="三级钢"><use href="#steel"/></svg></td><td class="hw">1</td><td><div class="len hw">1420</div><div class="bar"></div></td><td class="hw">1500-40-40</td><td>净长<span class="hw">-</span>保护层<span class="hw">-</span>保护层</td><td class="hw">1420</td><td class="hw">8</td><td class="hw">0</td><td class="hw">0</td><td class="hw">1.261</td><td class="hw">10.088</td><td>直筋</td><td>绑扎</td></tr>
      <tr><th class="hw">3</th><td>纵向底筋<span class="hw">.1</span></td><td class="hw">12</td><td class="text-center"><svg width="12" height="12" role="img" aria-label="三级钢"><use href="#steel"/></svg></td><td class="hw">1</td><td><div class="len hw">1420</div><div class="bar"></div></td><td class="hw">1500-40-40</td><td>净长<span class="hw">-</span>保护层<span class="hw">-</span>保护层</td><td class="hw">1420</td><td class="hw">2</td><td class="hw">0</td><td class="hw">0</td><td class="hw">1.261</td><td class="hw">2.522</td><td>直筋</td><td>绑扎</td></tr>
      <tr><th class="hw">4</th><td>纵向底筋<span class="hw">.2</span></td><td class="hw">12</td><td class="text-center"><svg width="12" height="12" role="img" aria-label="三级钢"><use href="#steel"/></svg></td><td class="hw">1</td><td><div class="len hw">1420</div><div class="bar"></div></td><td class="hw">1500-40-40</td><td>净长<span class="hw">-</span>保护层<span class="hw">-</span>保护层</td><td class="hw">1420</td><td class="hw">8</td><td class="hw">0</td><td class="hw">0</td><td class="hw">1.261</td><td class="hw">10.088</td><td>直筋</td><td>绑扎</td></tr>
      <tr class="new"><th class="hw">5</th><td></td><td></td><td></td><td></td><td></td><td></td><td></td><td></td><td></td><td></td><td></td><td></td><td></td><td></td><td></td></tr>
      </tbody>
     </table>
     <div class="blank"></div>
     <div class="hs d-flex align-items-center"><svg class="ms-1" width="10" height="10"><g transform="rotate(-90 5 5)"><use href="#up"/></g></svg><div class="thumb h-100 ms-1" style="width:70%"></div><svg class="ms-auto me-1" width="10" height="10"><g transform="rotate(90 5 5)"><use href="#up"/></g></svg></div>
    </div>
   </div>
  </section>
 </main>
</div>

<footer class="status d-flex flex-shrink-0 song"><div class="w148 hw">X=420042 Y=9260</div><div class="w78">层高<span class="hw">:2.15m</span></div><div class="w98">底标高<span class="hw">:-2.2m</span></div><div class="w48 hw">1(1)</div><div class="flex-grow-1"></div><div class="w70 hw">115.2 FPS</div></footer>

<div class="task d-flex align-items-stretch flex-shrink-0">
 <button class="start" aria-label="开始"><svg width="16" height="16" fill="#fff"><path d="M0 2.500l7-1v6H0zM8 1.300L16 0v7.500H8zM0 8.500h7v6l-7-1zM8 8.500h8V16l-8-1.300z"/></svg></button>
 <div class="search d-flex align-items-center ps-2"><svg width="24" height="24" class="me-2"><circle cx="12" cy="12" r="9" fill="none" stroke="#111" stroke-width="3"/></svg><input class="flex-grow-1" type="text" placeholder="在这里输入你要搜索的内容" aria-label="搜索"><svg class="me-2" width="24" height="18" fill="none" stroke="#333"><rect x="9.500" y="1.500" width="5" height="10" rx="2"/><path d="M7 8c0 8 10 8 10 0M12 14v3M9 17h6"/></svg></div>
 <button class="app-i" aria-label="任务视图"><svg viewBox="0 0 26 26" fill="none" stroke="#fff"><path d="M5.500 5V3M5.500 7.500h11v10h-11zM16.500 5V3M5.500 4.500h11M5.500 23v-2.500h11V23M21.500 3v6M21.500 14v9"/><path d="M20 9.500h3v3h-3z" fill="#fff"/></svg></button>
 <button class="app-i" aria-label="风车"><svg viewBox="0 0 24 24" fill="#ececec" stroke="#04151a"><path d="M12 12V6c0-4-2-5-5-5S1 4 1 7s3 4 6 3 5 0 5 2z"/><path d="M12 12h6c4 0 5-2 5-5s-3-6-6-6-4 3-3 6 0 5-2 5z"/><path d="M12 12v6c0 4 2 5 5 5s6-3 6-6-3-4-6-3-5 0-5-2z"/><path d="M12 12H6c-4 0-5 2-5 5s3 6 6 6 4-3 3-6 0-5 2-5z"/></svg></button>
 <button class="app-i" aria-label="浏览器"><svg viewBox="0 0 26 26" fill="none"><path d="M20 18c-3 6-13 5-14-2 0-9 14-10 15 0H8" stroke="#1e90f0" stroke-width="4"/><path d="M4 25C0 21 8 8 18 6" stroke="#56b8f8" stroke-width="2"/><circle cx="21" cy="5" r="4.500" fill="#f47a20" stroke="#fff" stroke-width="1.500"/></svg></button>
 <button class="app-i" aria-label="提醒"><svg viewBox="0 0 26 26" fill="none" stroke="#ddd" stroke-width="1.500"><path d="M10 14c4-1 4 5 0 5-6 0-6-9 1-9 8 0 8 14-2 14-10 0-8-16 3-16"/><path d="M14 12l2-2V5c1-5 7-5 8 0v5l2 2zM19 13h3" fill="#e5a91c" stroke="#e5a91c"/></svg></button>
 <button class="app-i run" aria-label="帮助"><svg viewBox="0 0 26 26"><path d="M4 11h10v12H4z" fill="#fff"/><path d="M6 14h6M6 17h6M6 20h6" stroke="#555"/><path d="M11.500 7c0-4 8-4 8 0 0 3-4 3-4 7M15.500 16v3" stroke="#f7ec13" stroke-width="3" fill="none"/></svg></button>
 <button class="app-i run" aria-label="PDF"><svg viewBox="0 0 26 26"><rect x="1.500" y="1.500" width="23" height="23" rx="2" fill="#c96a16" stroke="#aaa" stroke-width="1.500"/><text x="13" y="18" font-family="Liberation Sans,sans-serif" font-weight="bold" font-size="10" fill="#f4e4d4" text-anchor="middle">PDF</text></svg></button>
 <button class="app-i act" aria-label="广联达"><svg><use href="#logo"/></svg></button>
 <div class="vs ms-auto d-flex flex-column align-items-center justify-content-between py-1"><svg width="10" height="10"><use href="#up"/></svg><svg width="10" height="10"><g transform="rotate(180 5 5)"><use href="#up"/></g></svg></div>
 <div class="temp text-center">温度<br>读取中...</div>
 <div class="tray d-flex align-items-center justify-content-between">
  <svg width="16" height="16" fill="none" stroke="#fff"><circle cx="10.500" cy="4" r="2.500"/><circle cx="5" cy="7.500" r="2.500"/><path d="M1 15c0-6 8-6 8 0M10 8c3-1 5 1 5 4"/></svg>
  <svg class="ms-3" width="12" height="10" fill="none" stroke="#fff"><path d="M1 8l5-5 5 5"/></svg>
  <svg width="18" height="14" fill="none" stroke="#fff"><path d="M5.500 4.500h10v7h-10zM16.500 6v4M1 2v3h4V2M2 0v2M4 0v2M3 5v5h2"/><path d="M8 6h6v4H8z" fill="#fff"/></svg>
  <svg width="14" height="14" fill="none" stroke="#ddd"><path d="M1 12C2 6 6 2 12 1M4 12c1-4 4-7 8-8M7 13c1-3 3-5 6-6"/><circle cx="11" cy="12" r="1.500" fill="#fff"/></svg>
  <svg width="18" height="14" fill="none" stroke="#fff"><path d="M1 5h3l3-3v10L4 9H1zM9.500 5q1.500 2 0 4M12 3q3 4 0 8M14.500 1.500q4 5 0 11"/></svg>
  <svg width="23" height="14" fill="none" stroke="#fff"><path d="M.5.500h22v12H.5z"/><path d="M3 4h17M3 6.500h17" stroke-dasharray="1.500 1.500"/><path d="M5 9.500h13"/></svg>
  <span>中</span>
  <svg width="16" height="16"><rect x="1" y="1" width="14" height="14" rx="2" fill="#f04a20"/><path d="M12 4.500C7 2 3 6 8 7.500s3 5-4 3" fill="none" stroke="#fff" stroke-width="2.300"/></svg>
 </div>
 <div class="clock text-center">14:17<br>2018/10/27</div>
 <svg class="align-self-center flex-shrink-0 me-3" width="26" height="26"><path d="M2 3h15v11H10l-3 4v-4H2z" fill="#fff"/><path d="M5 6h9M5 9h9" stroke="#04151a"/><circle cx="17" cy="17" r="7.500" fill="#333" stroke="#999"/><text x="14" y="21" font-size="11" fill="#fff" font-family="Noto Sans,sans-serif">1</text></svg>
</div>
</div>
<script src="https://cdn.jsdelivr.net/npm/bootstrap@5.3.0/dist/js/bootstrap.bundle.min.js"></script>
</body>
</html>
